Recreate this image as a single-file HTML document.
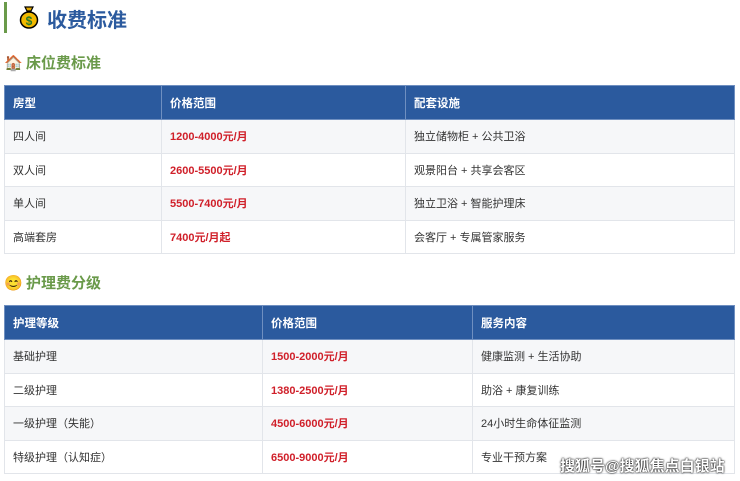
<!DOCTYPE html>
<html><head><meta charset="utf-8"><style>
body{margin:0;background:#fff;font-family:"Liberation Sans","Noto Sans CJK SC",sans-serif;width:740px;height:481px;overflow:hidden;position:relative}
.t{position:absolute;left:4px;top:2px;height:31px;border-left:3px solid #6a9a4a}
.t span{position:absolute;left:40px;top:2px;font-size:20px;font-weight:bold;color:#2b5a9e;white-space:nowrap}
.st{position:absolute;left:4px;font-size:15px;font-weight:bold;color:#6a9a4a;white-space:nowrap}
.st i{font-style:normal;display:inline-block;width:18px;margin-right:4px}
table{position:absolute;left:4px;width:731px;border-collapse:collapse;font-size:11px;color:#333}
th{background:#2b5a9e;color:#fff;text-align:left;font-weight:bold;border:1px solid #6f8fc0;padding:0 8px;height:33px;font-size:11.5px}
td{border:1px solid #e2e5ea;padding:0 8px;height:32.5px}
tr:nth-child(even) td{background:#f6f7f9}
.p{color:#d0202a;font-weight:bold}
.wm{position:absolute;left:560px;top:455px;font-size:15px;color:#fff;font-weight:bold;text-shadow:0 0 2px #000,0 0 1px #000;white-space:nowrap}
</style></head><body>
<div class="t"><svg style="position:absolute;left:12px;top:3px" width="20" height="24" viewBox="0 0 20 24"><path d="M6 2h8l-2 4h-4z" fill="#e0a800" stroke="#000" stroke-width="1.2"/><ellipse cx="10" cy="15" rx="8.5" ry="8" fill="#f2b900" stroke="#000" stroke-width="1.5"/><text x="10" y="20" font-size="12" text-anchor="middle" fill="#2a7a2a" font-weight="bold">$</text></svg><span>收费标准</span></div>
<div class="st" style="top:52px"><i>🏠</i>床位费标准</div>
<table style="top:85px">
<colgroup><col style="width:157px"><col style="width:244px"><col></colgroup>
<tr><th>房型</th><th>价格范围</th><th>配套设施</th></tr>
<tr><td>四人间</td><td class="p">1200-4000元/月</td><td>独立储物柜 + 公共卫浴</td></tr>
<tr><td>双人间</td><td class="p">2600-5500元/月</td><td>观景阳台 + 共享会客区</td></tr>
<tr><td>单人间</td><td class="p">5500-7400元/月</td><td>独立卫浴 + 智能护理床</td></tr>
<tr><td>高端套房</td><td class="p">7400元/月起</td><td>会客厅 + 专属管家服务</td></tr>
</table>
<div class="st" style="top:272px"><i>😊</i>护理费分级</div>
<table style="top:305px">
<colgroup><col style="width:258px"><col style="width:210px"><col></colgroup>
<tr><th>护理等级</th><th>价格范围</th><th>服务内容</th></tr>
<tr><td>基础护理</td><td class="p">1500-2000元/月</td><td>健康监测 + 生活协助</td></tr>
<tr><td>二级护理</td><td class="p">1380-2500元/月</td><td>助浴 + 康复训练</td></tr>
<tr><td>一级护理（失能）</td><td class="p">4500-6000元/月</td><td>24小时生命体征监测</td></tr>
<tr><td>特级护理（认知症）</td><td class="p">6500-9000元/月</td><td>专业干预方案</td></tr>
</table>
<div class="wm">搜狐号@搜狐焦点白银站</div>
</body></html>
